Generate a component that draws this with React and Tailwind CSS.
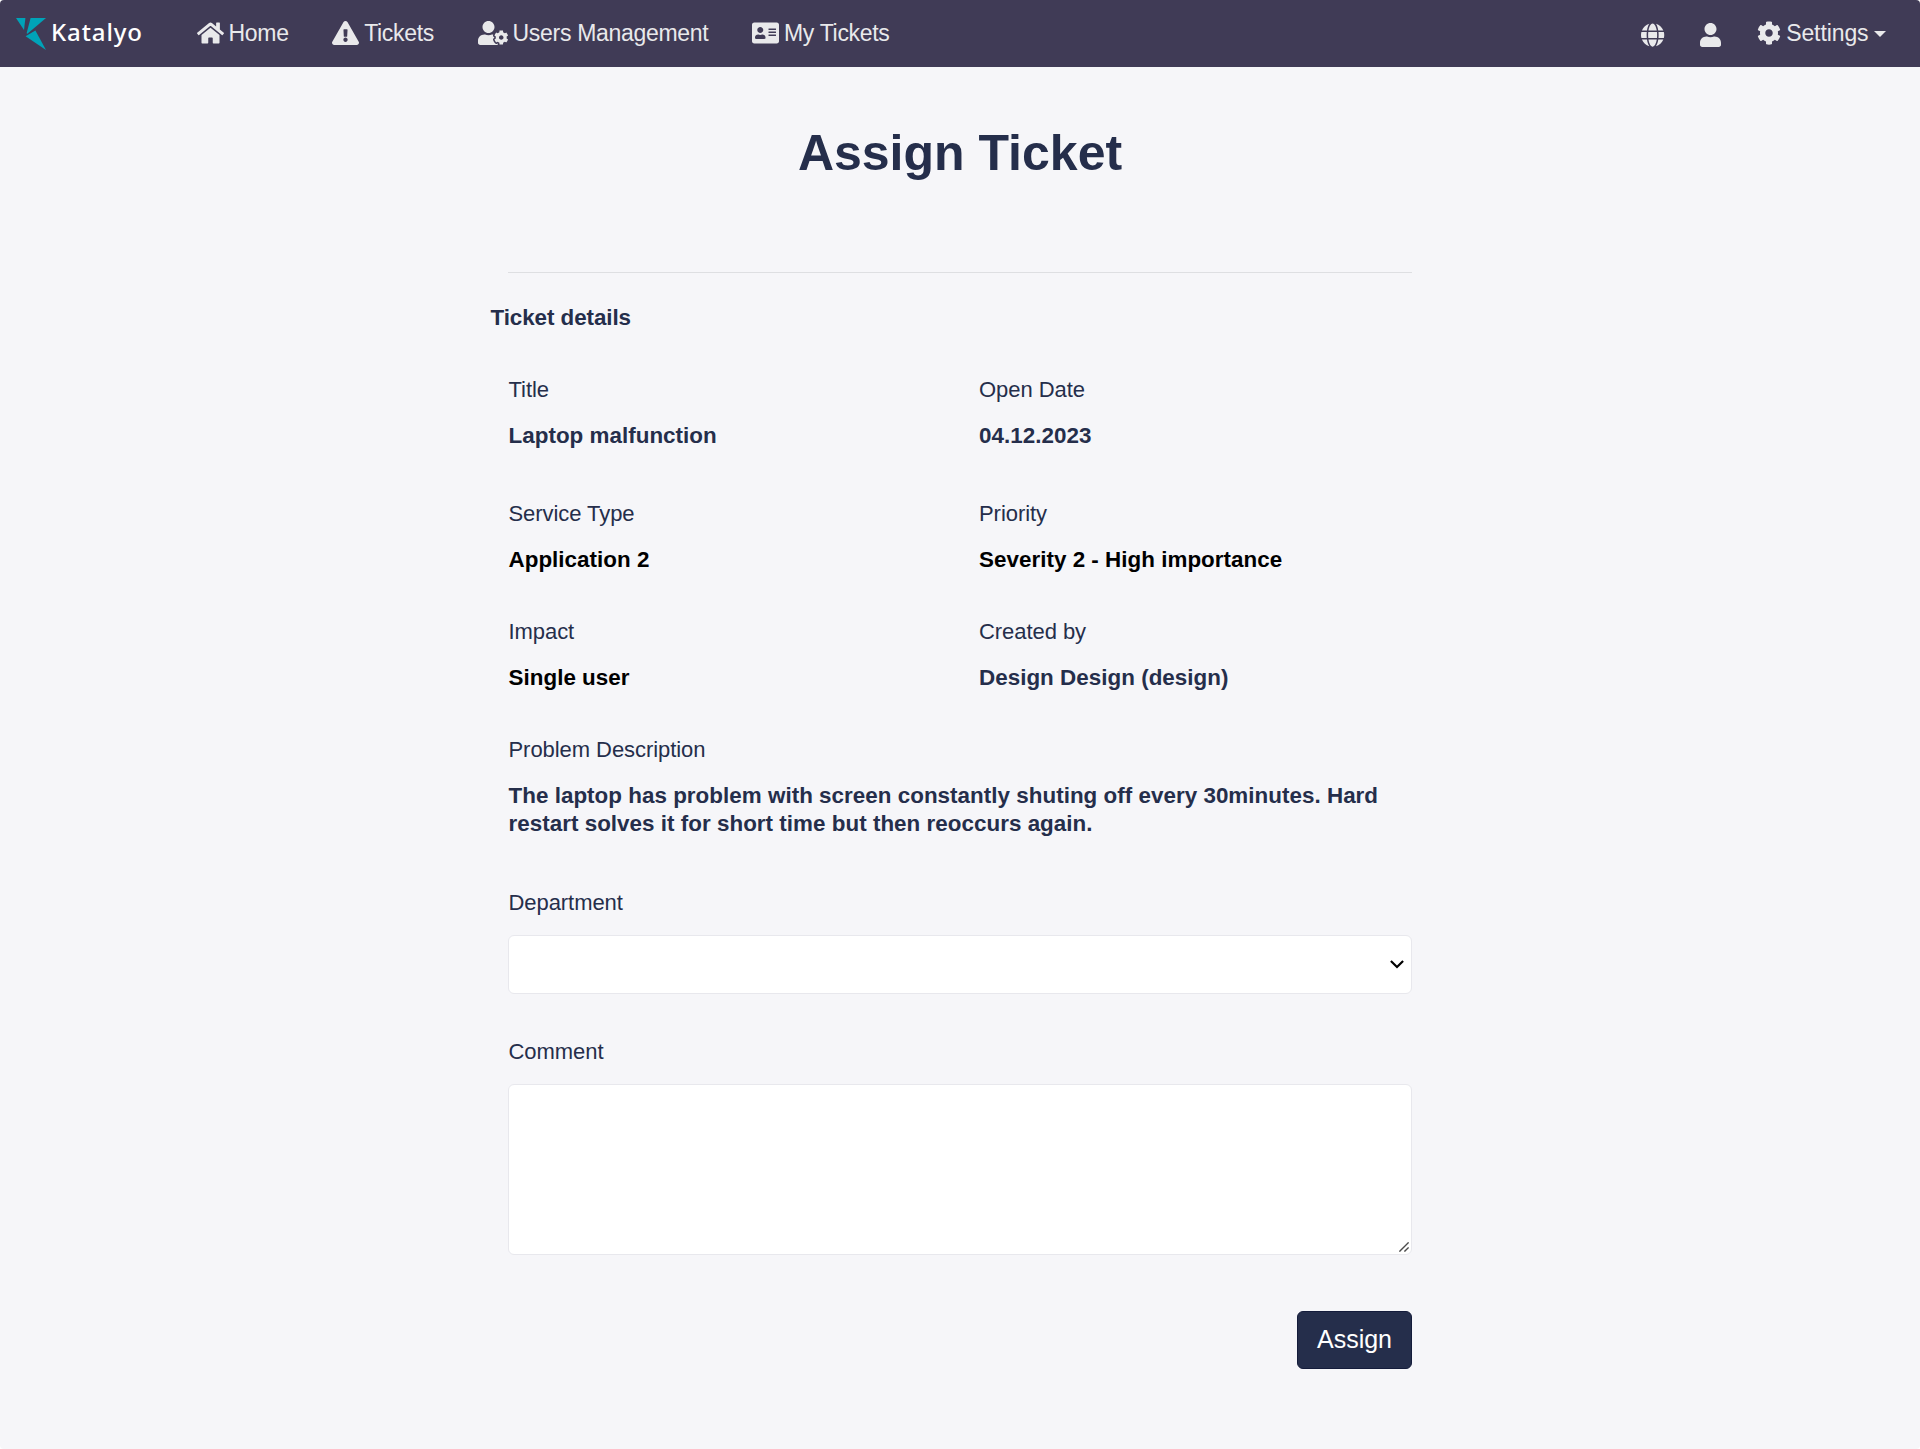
import React from 'react';
import { FaHome, FaExclamationTriangle, FaUserCog, FaAddressCard, FaGlobe, FaUser, FaCog } from 'react-icons/fa';

function Logo() {
  return (
    <a className="flex w-[126px] items-start" href="#">
      <svg className="mt-[18px] h-8 w-[30px] shrink-0" viewBox="0 0 30 32" fill="#00a3b8">
        <path d="M0 0H9.4L8 12Z" />
        <path d="M14.6 0H30L11.4 15.8L10.6 15.2Z" />
        <path d="M9.6 18.2L19.4 12.6L30 32Z" />
      </svg>
      <span className="ml-[5px] mt-[14px] font-['Noto_Sans',sans-serif] text-[24px] font-medium leading-[35px] tracking-[0.9px] text-white">
        Katalyo
      </span>
    </a>
  );
}

function NavItem({ icon: Icon, iconClass, label, className }) {
  return (
    <a className={`flex items-center ${className}`} href="#">
      <Icon className={`-mt-px h-6 shrink-0 ${iconClass}`} />
      <span className="leading-[34px]">{label}</span>
    </a>
  );
}

function Navbar() {
  return (
    <nav className="flex h-[67px] items-start rounded-t bg-[#403b56] pl-4 text-[23px] tracking-[-0.3px] text-[#e9e9eb]">
      <Logo />
      <div className="ml-[54.5px] flex pt-4">
        <NavItem icon={FaHome} iconClass="w-[27px]" label="Home" className="gap-[5px]" />
        <NavItem icon={FaExclamationTriangle} iconClass="w-[27px]" label="Tickets" className="ml-[43px] gap-[5.5px]" />
        <NavItem icon={FaUserCog} iconClass="w-[30px]" label="Users Management" className="ml-[43.5px] gap-[5px]" />
        <NavItem icon={FaAddressCard} iconClass="w-[27px]" label="My Tickets" className="ml-[43.5px] gap-[5px]" />
      </div>
      <div className="ml-auto flex items-start pr-[34px] pt-4">
        <FaGlobe className="mt-[7px] h-6 w-[23.25px]" />
        <FaUser className="ml-[35.5px] mt-[7px] h-6 w-[21px]" />
        <a className="ml-[36px] flex items-center tracking-[-0.1px]" href="#">
          <FaCog className="-mt-px h-6 w-6" />
          <span className="ml-[5px] leading-[34px]">Settings</span>
          <span className="ml-[5.5px] mt-[1px] border-x-[6px] border-t-[6px] border-x-transparent border-t-[#e9e9eb]" />
        </a>
      </div>
    </nav>
  );
}

function Label({ children }) {
  return <div className="pl-[0.5px] text-[22px] leading-[26px] tracking-[-0.06px]">{children}</div>;
}

function Field({ label, value, dark }) {
  return (
    <div>
      <Label>{label}</Label>
      <div
        className={`mt-[19px] pl-[0.5px] text-[22.4px] font-bold leading-7 tracking-[0.03px] ${dark ? 'text-black' : ''}`}
      >
        {value}
      </div>
    </div>
  );
}

export default function App() {
  return (
    <div className="min-h-screen bg-white font-['Liberation_Sans',Arial,sans-serif]">
      <div className="min-h-[1449px] rounded bg-[#f6f6f9] text-[#252e4b]">
        <Navbar />
        <main className="mx-auto w-[904px] pt-[58px]">
          <h1 className="text-center text-[50px] font-bold leading-[56px]">Assign Ticket</h1>
          <hr className="mt-[91px] border-t border-[#dedfe2]" />
          <h2 className="-ml-[17.5px] mt-[31px] text-[22.4px] font-bold leading-7 tracking-[-0.07px]">Ticket details</h2>

          <section className="mt-[45px] grid grid-cols-[470.5px_1fr]">
            <Field label="Title" value="Laptop malfunction" />
            <Field label="Open Date" value="04.12.2023" />
          </section>
          <section className="mt-[51px] grid grid-cols-[470.5px_1fr] gap-y-[45px]">
            <Field label="Service Type" value="Application 2" dark />
            <Field label="Priority" value="Severity 2 - High importance" dark />
            <Field label="Impact" value="Single user" dark />
            <Field label="Created by" value="Design Design (design)" />
            <div className="col-span-2">
              <Field
                label="Problem Description"
                value="The laptop has problem with screen constantly shuting off every 30minutes. Hard restart solves it for short time but then reoccurs again."
              />
            </div>
          </section>

          <div className="mt-[52px]">
            <Label>Department</Label>
            <div className="mt-[19px] flex h-[59px] items-center justify-end rounded-md border border-[#e8e8ed] bg-white pr-[7px]">
              <svg className="h-[9px] w-[14px]" viewBox="0 0 14 9" fill="none" stroke="#000" strokeWidth="2.2">
                <path d="M0.9 1L7 7L13.1 1" />
              </svg>
            </div>
          </div>

          <div className="mt-[45px]">
            <Label>Comment</Label>
            <div className="mt-[19px] flex h-[171px] items-end justify-end rounded-md border border-[#e8e8ed] bg-white pb-[2px] pr-[2px]">
              <svg className="h-[10px] w-[10px]" viewBox="0 0 10 10" stroke="#4b4b4b" strokeWidth="1.4">
                <path d="M0.4 9.6L9.6 0.4M5.4 9.6L9.6 5.4" />
              </svg>
            </div>
          </div>

          <div className="mt-[56px] flex justify-end">
            <button className="h-[58px] w-[115px] rounded-md border border-[#141c3b] bg-[#252e4b] pb-px text-[25px] leading-[55px] text-white">
              Assign
            </button>
          </div>
        </main>
      </div>
    </div>
  );
}
